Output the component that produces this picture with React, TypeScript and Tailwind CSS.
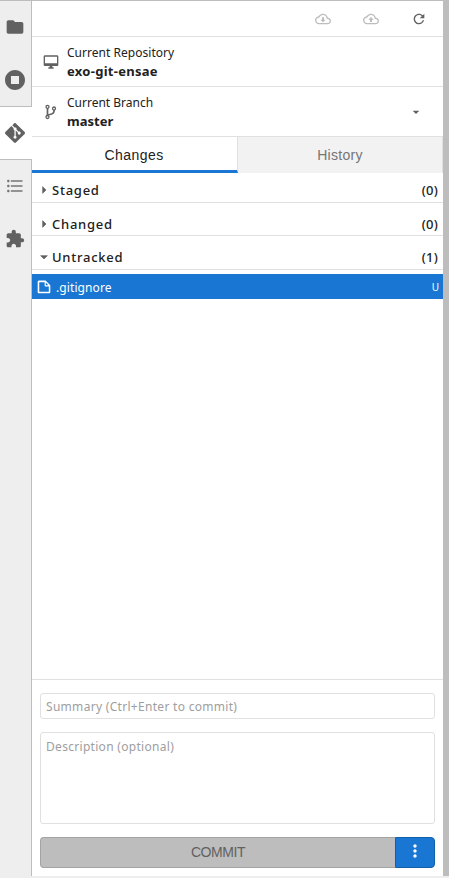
import type { ReactNode } from "react";

const paths = {
  folder: "M10 4H4c-1.1 0-1.99.9-1.99 2L2 18c0 1.1.9 2 2 2h16c1.1 0 2-.9 2-2V8c0-1.1-.9-2-2-2h-8l-2-2z",
  running: "M12 2C6.48 2 2 6.48 2 12s4.48 10 10 10 10-4.48 10-10S17.52 2 12 2zm4 14H8V8h8v8z",
  git: "M23.546 10.93L13.067.452c-.604-.603-1.582-.603-2.188 0L8.708 2.627l2.76 2.76c.645-.215 1.379-.07 1.889.441.516.515.658 1.258.438 1.9l2.658 2.66c.645-.223 1.387-.078 1.9.435.721.72.721 1.884 0 2.604-.719.719-1.881.719-2.6 0-.539-.541-.674-1.337-.404-1.996L12.86 8.955v6.525c.176.086.342.203.488.348.713.721.713 1.883 0 2.6-.719.721-1.889.721-2.609 0-.719-.719-.719-1.879 0-2.598.182-.18.387-.316.605-.406V8.835c-.217-.091-.424-.222-.6-.401-.545-.545-.676-1.342-.396-2.009L7.636 3.7.45 10.881c-.6.605-.6 1.584 0 2.189l10.48 10.477c.604.604 1.582.604 2.186 0l10.43-10.43c.605-.603.605-1.582 0-2.187",
  list: "M4 10.5c-.83 0-1.5.67-1.5 1.5s.67 1.5 1.5 1.5 1.5-.67 1.5-1.5-.67-1.5-1.5-1.5zm0-6c-.83 0-1.5.67-1.5 1.5S3.17 7.5 4 7.5 5.5 6.83 5.5 6 4.83 4.5 4 4.5zm0 12c-.83 0-1.5.68-1.5 1.5s.68 1.5 1.5 1.5 1.5-.68 1.5-1.5-.67-1.5-1.5-1.5zM7 19h14v-2H7v2zm0-6h14v-2H7v2zm0-8v2h14V5H7z",
  puzzle: "M20.5 11H19V7c0-1.1-.9-2-2-2h-4V3.5C13 2.12 11.88 1 10.5 1S8 2.12 8 3.5V5H4c-1.1 0-1.99.9-1.99 2v3.8H3.5c1.49 0 2.7 1.21 2.7 2.7s-1.21 2.7-2.7 2.7H2V20c0 1.1.9 2 2 2h3.8v-1.5c0-1.49 1.21-2.7 2.7-2.7s2.7 1.21 2.7 2.7V22H17c1.1 0 2-.9 2-2v-4h1.5c1.38 0 2.5-1.12 2.5-2.5S21.88 11 20.5 11z",
  desktop: "M21 2H3c-1.1 0-2 .9-2 2v12c0 1.1.9 2 2 2h7v2H8v2h8v-2h-2v-2h7c1.1 0 2-.9 2-2V4c0-1.1-.9-2-2-2zm0 12H3V4h18v10z",
  refresh: "M17.65 6.35C16.2 4.9 14.21 4 12 4c-4.42 0-7.99 3.58-7.99 8s3.57 8 7.99 8c3.73 0 6.84-2.55 7.73-6h-2.08c-.82 2.33-3.04 4-5.65 4-3.31 0-6-2.69-6-6s2.69-6 6-6c1.66 0 3.14.69 4.22 1.78L13 11h7V4l-2.35 2.35z",
  down: "M7 10l5 5 5-5z",
  right: "M10 7l5 5-5 5z",
  more: "M12 8c1.1 0 2-.9 2-2s-.9-2-2-2-2 .9-2 2 .9 2 2 2zm0 2c-1.1 0-2 .9-2 2s.9 2 2 2 2-.9 2-2-.9-2-2-2zm0 6c-1.1 0-2 .9-2 2s.9 2 2 2 2-.9 2-2-.9-2-2-2z",
};

const cloud =
  "M19.35 10.04C18.67 6.59 15.64 4 12 4 9.11 4 6.6 5.64 5.35 8.04 2.34 8.36 0 10.91 0 14c0 3.31 2.69 6 6 6h13c2.76 0 5-2.24 5-5 0-2.64-2.05-4.78-4.65-4.96zM19 18H6c-2.21 0-4-1.79-4-4 0-2.05 1.53-3.76 3.56-3.97l1.07-.11.5-.95C8.08 7.14 9.94 6 12 6c2.62 0 4.88 1.86 5.39 4.43l.3 1.5 1.53.11c1.56.1 2.78 1.41 2.78 2.96 0 1.65-1.35 3-3 3z";

function Icon({ d, className }: { d: string; className: string }) {
  return (
    <svg viewBox="0 0 24 24" className={`block shrink-0 fill-current ${className}`}>
      <path d={d} />
    </svg>
  );
}

function SideTab({ active, children }: { active?: boolean; children: ReactNode }) {
  return (
    <div
      className={
        active
          ? "flex h-[54px] w-8 items-center border-y border-[#bdbdbd] bg-white pl-[5px]"
          : "flex h-[53px] w-8 items-center border-r border-[#bdbdbd] pb-0.5 pl-[5px]"
      }
    >
      {children}
    </div>
  );
}

function Section({ title, count, open, className }: { title: string; count: string; open?: boolean; className: string }) {
  return (
    <div className={`flex border-b border-[#e0e0e0] pl-1 pr-[5px] text-[13px] leading-[18px] ${className}`}>
      <Icon d={open ? paths.down : paths.right} className="mt-px size-4 stroke-current text-[#616161]" />
      <span className="flex-1 overflow-hidden font-medium tracking-[0.75px]">{title}</span>
      <span className="font-medium tracking-[0.2px]">{count}</span>
    </div>
  );
}

export default function App() {
  return (
    <div className="flex h-[878px] w-[449px] flex-col overflow-hidden border-t border-[#bdbdbd] bg-[#eeeeee] font-['Noto_Sans',sans-serif] text-[13px] text-[#212121]">
      <div className="flex h-[875px]">
        <nav className="flex w-8 shrink-0 flex-col bg-[#eeeeee] text-[#616161]">
          <SideTab><Icon d={paths.folder} className="size-5" /></SideTab>
          <div className="flex h-[52px] w-8 items-center border-r border-[#bdbdbd] pl-[3px]">
            <Icon d={paths.running} className="size-6" />
          </div>
          <SideTab active><Icon d={paths.git} className="size-5" /></SideTab>
          <SideTab><Icon d={paths.list} className="size-5 text-[#757575]" /></SideTab>
          <SideTab><Icon d={paths.puzzle} className="size-5" /></SideTab>
          <div className="w-8 flex-1 border-r border-[#bdbdbd]" />
        </nav>

        <main className="flex w-[411px] shrink-0 flex-col bg-white">
          <div className="flex h-9 items-center justify-end gap-8 border-b border-[#e0e0e0] pr-4 text-[#bdbdbd]">
            <svg viewBox="0 0 24 24" className="mt-px size-4 fill-current">
              <path d={cloud} />
              <path d="M10.500 9.500h3V13H16l-4 4-4-4h2.500z" />
            </svg>
            <svg viewBox="0 0 24 24" className="mt-px size-4 fill-current">
              <path d={cloud} />
              <path d="M8 13h2.500v3.500h3V13H16l-4-4z" />
            </svg>
            <Icon d={paths.refresh} className="size-4 text-[#616161]" />
          </div>

          <div className="flex h-[50px] items-center border-b border-[#e0e0e0] pl-[11px]">
            <Icon d={paths.desktop} className="size-4 text-[#616161]" />
            <div className="ml-2 flex flex-col leading-[19px]">
              <span className="text-[12px] tracking-[0.03px]">Current Repository</span>
              <span className="font-bold tracking-[0.28px]">exo-git-ensae</span>
            </div>
          </div>

          <div className="flex h-[50px] items-center border-b border-[#e0e0e0] pl-[11px] pr-[19px]">
            <svg viewBox="0 0 16 16" className="size-4 fill-none stroke-[#616161]" strokeWidth="1.300">
              <circle cx="4.500" cy="2.800" r="1.500" />
              <circle cx="4.500" cy="13" r="1.500" />
              <circle cx="11" cy="4.500" r="1.500" />
              <path strokeWidth="1.700" d="M4.500 4.300v7.200M11 6v1.500c0 1.500-1 2-2.500 2.500-2 .6-3.500.8-4 2" />
            </svg>
            <div className="ml-2 flex flex-1 flex-col leading-[19px]">
              <span className="text-[12px]">Current Branch</span>
              <span className="font-bold">master</span>
            </div>
            <Icon d={paths.down} className="size-4 text-[#616161]" />
          </div>

          <div className="flex h-9 shrink-0 font-['Liberation_Sans',sans-serif] text-[14px] tracking-[0.45px]">
            <div className="flex w-[206px] items-center justify-center border-b-[3px] border-r border-b-[#1976d2] border-r-[#e0e0e0] pr-px pt-[3px]">
              Changes
            </div>
            <div className="flex flex-1 items-center justify-center border-r border-[#e0e0e0] bg-[#f2f2f2] text-[#757575]">
              <span className="tracking-[0.3px]">History</span>
            </div>
          </div>

          <Section title="Staged" count="(0)" className="h-[30px] pt-2" />
          <Section title="Changed" count="(0)" className="h-[33px] pt-3" />
          <Section title="Untracked" count="(1)" open className="h-[34px] pt-3" />

          <div className="mt-1 flex h-[25px] items-center bg-[#1976d2] pl-1 pr-1 text-white">
            <svg viewBox="0 0 22 22" className="size-4 fill-current">
              <path d="M19.300 8.200l-5.500-5.500c-.3-.3-.7-.5-1.200-.5H3.900c-.8.1-1.600.9-1.600 1.800v14.100c0 .9.7 1.600 1.600 1.600h14.200c.9 0 1.600-.7 1.600-1.600V9.400c.1-.5-.1-.9-.4-1.200zm-5.800-3.300l3.400 3.600h-3.400V4.900zm3.900 12.700H4.700c-.1 0-.2 0-.2-.2V4.700c0-.2.1-.3.2-.3h7.200v4.400s0 .8.300 1.100c.3.300 1.100.300 1.100.300h4.300v7.200s-.1.200-.2.200z" />
            </svg>
            <span className="ml-1 flex-1 pt-0.5 text-[12px] tracking-[0.1px]">.gitignore</span>
            <span className="pt-0.5 text-[10px]">U</span>
          </div>

          <div className="flex-1" />

          <div className="flex h-[197px] flex-col border-t border-[#e0e0e0] px-2 pt-[13px] text-[12px] leading-[18px] tracking-[0.3px] text-[#9e9e9e]">
            <div className="h-[26px] rounded-[3px] border border-[#e0e0e0] px-[5px] pt-1">
              Summary (Ctrl+Enter to commit)
            </div>
            <div className="mt-[13px] h-[92px] rounded-[3px] border border-[#e0e0e0] px-[5px] pt-[5px]">
              Description (optional)
            </div>
            <div className="mt-[13px] flex h-[31px] w-[395px] font-['Liberation_Sans',sans-serif] text-[14px] tracking-[-0.45px]">
              <div className="flex w-[355px] items-center justify-center rounded-l-[4px] border border-r-0 border-[#a3a3a3] bg-[#bdbdbd] pb-0.5 text-[#616161]">
                COMMIT
              </div>
              <div className="flex flex-1 items-start justify-center rounded-r-[4px] border border-[#1260a8] bg-[#1976d2] pt-[3px] text-white">
                <Icon d={paths.more} className="size-5" />
              </div>
            </div>
          </div>
        </main>
        <div className="flex-1 bg-[#bdbdbd]" />
      </div>
    </div>
  );
}
